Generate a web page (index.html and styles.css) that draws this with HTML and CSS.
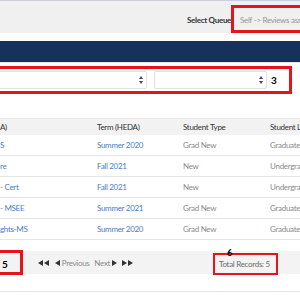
FILE: index.html
```html
<!DOCTYPE html>
<html lang="en">
  <head>
    <meta charset="UTF-8" />
    <title>Review Queue</title>
    <link rel="stylesheet" href="styles.css">
  </head>
  <body>
    <div class="page">
      <div class="queuebar">
        <span class="queuelabel">Select Queue</span>
        <div class="mark mark-queue">
          <div class="queueselect">Self -&gt; Reviews assigned to me</div>
        </div>
      </div>

      <div class="navbar"></div>

      <div class="mark mark-filters">
        <div class="select select-wide">
          <svg class="spin" width="4" height="8" viewBox="0 0 4 8"><path d="M2 0L4 3H0z M2 8L4 5H0z" fill="#3a4a66"/></svg>
        </div>
        <div class="select select-narrow">
          <svg class="spin" width="4" height="8" viewBox="0 0 4 8"><path d="M2 0L4 3H0z M2 8L4 5H0z" fill="#3a4a66"/></svg>
        </div>
        <span class="num">3</span>
      </div>

      <table class="records">
        <thead>
          <tr>
            <th>A)</th>
            <th>Term (HEDA)</th>
            <th>Student Type</th>
            <th>Student Level</th>
          </tr>
        </thead>
        <tbody>
          <tr>
            <td class="link">S</td>
            <td class="link">Summer 2020</td>
            <td>Grad New</td>
            <td>Graduate</td>
          </tr>
          <tr>
            <td class="link">re</td>
            <td class="link">Fall 2021</td>
            <td>New</td>
            <td>Undergraduate</td>
          </tr>
          <tr>
            <td class="link">- Cert</td>
            <td class="link">Fall 2021</td>
            <td>New</td>
            <td>Undergraduate</td>
          </tr>
          <tr>
            <td class="link">- MSEE</td>
            <td class="link">Summer 2021</td>
            <td>Grad New</td>
            <td>Graduate</td>
          </tr>
          <tr>
            <td class="link">ghts-MS</td>
            <td class="link">Summer 2020</td>
            <td>Grad New</td>
            <td>Graduate</td>
          </tr>
        </tbody>
      </table>

      <div class="pager">
        <div class="mark mark-size"><span class="num">5</span></div>
        <div class="nav">
          <svg width="12" height="6" viewBox="0 0 12 6"><path d="M0 3L5 0V6z M6 3L11 0V6z" fill="#333"/></svg>
          <span class="step">
            <svg width="5" height="6" viewBox="0 0 5 6"><path d="M0 3L5 0V6z" fill="#333"/></svg>
            Previous
          </span>
          <span class="step">
            Next
            <svg width="5" height="6" viewBox="0 0 5 6"><path d="M5 3L0 0V6z" fill="#333"/></svg>
          </span>
          <svg width="12" height="6" viewBox="0 0 12 6"><path d="M11 3L6 0V6z M5 3L0 0V6z" fill="#333"/></svg>
        </div>
        <div class="mark mark-total">
          <span class="badge">6</span>
          Total Records: 5
        </div>
      </div>

      <div class="footline"></div>
    </div>
  </body>
</html>
```

FILE: styles.css
```css
body {
  margin: 0;
  overflow: hidden;
  background: #fff;
}

.page {
  width: 300px;
  height: 300px;
  overflow: hidden;
  font-family: "Lato", sans-serif;
  font-size: 8px;
  letter-spacing: -0.3px;
  color: #3e3e3c;
}

.queuebar {
  height: 28px;
  padding-top: 4px;
  border-top: 1px solid #c8cfdf;
  background-color: #f0f0f0;
  display: flex;
  align-items: flex-start;
}

.queuelabel {
  flex: none;
  margin: 10px 0 0 187px;
  font-weight: 700;
  color: #333;
}

.mark {
  flex: none;
  border: 3px solid #e3141b;
}

.mark-queue {
  width: 80px;
  height: 22px;
  margin-left: auto;
  overflow: hidden;
}

.queueselect {
  padding: 7px 0 0 6px;
  white-space: nowrap;
  color: #959595;
  font-size: 8px;
}

.navbar {
  height: 21px;
  margin-top: 8px;
  border-bottom: 1px solid #e6e6e6;
  background-color: #16325c;
}

.mark-filters {
  width: 297px;
  height: 20px;
  margin: 3px 0 0 -11px;
  padding: 1px 0;
  display: flex;
  align-items: center;
}

.select {
  flex: none;
  height: 16px;
  border: 1px solid #e2e2e2;
  border-radius: 2px;
  background: #fff;
  display: flex;
  align-items: center;
  justify-content: flex-end;
  padding-right: 3px;
}

.select-wide {
  width: 154px;
  margin-left: -4px;
}

.select-narrow {
  width: 108px;
  margin-left: 7px;
}

.num {
  margin-left: 4px;
  font-size: 10px;
  font-weight: 700;
  letter-spacing: 0;
  color: #000;
}

.records {
  width: 420px;
  margin-top: 24px;
  border-collapse: collapse;
  table-layout: fixed;
}

.records th:nth-child(1) { width: 97px; }
.records th:nth-child(2) { width: 86px; }
.records th:nth-child(3) { width: 87px; }

.records th {
  height: 16px;
  padding: 0;
  background-color: #f2f2f2;
  border-top: 1px solid #e8e8e8;
  text-align: left;
  font-weight: 400;
  color: #333;
}

.records td {
  height: 20px;
  padding: 0;
  border-bottom: 1px solid #e5e5e5;
  color: #8a8a8a;
  white-space: nowrap;
}

.records td.link {
  color: #4a7dc9;
}

.pager {
  height: 23px;
  margin-top: 11px;
  background-color: #f3f3f3;
  display: flex;
  align-items: flex-start;
}

.mark-size {
  width: 30px;
  height: 19px;
  margin: -1px 0 0 -10px;
  padding-left: 0;
  border-left: 0;
  display: flex;
  align-items: center;
}

.mark-size .num {
  margin: 3px 0 0 12px;
}

.nav {
  flex: none;
  width: 96px;
  height: 23px;
  margin-left: 15px;
  display: flex;
  align-items: center;
  justify-content: space-between;
  color: #8a8a8a;
  white-space: nowrap;
}

.step {
  display: flex;
  align-items: center;
  gap: 2px;
}

.mark-total {
  position: relative;
  height: 18px;
  margin: 2px 0 0 79px;
  padding: 0 6px 0 4px;
  border-width: 2px;
  display: flex;
  align-items: center;
  white-space: nowrap;
  color: #6b6b6b;
}

.badge {
  position: absolute;
  top: -7px;
  left: 12px;
  line-height: 9px;
  font-size: 9px;
  font-weight: 700;
  letter-spacing: 0;
  color: #000;
}

.footline {
  margin-top: 17px;
  border-top: 1px solid #e5e5e5;
}
```
